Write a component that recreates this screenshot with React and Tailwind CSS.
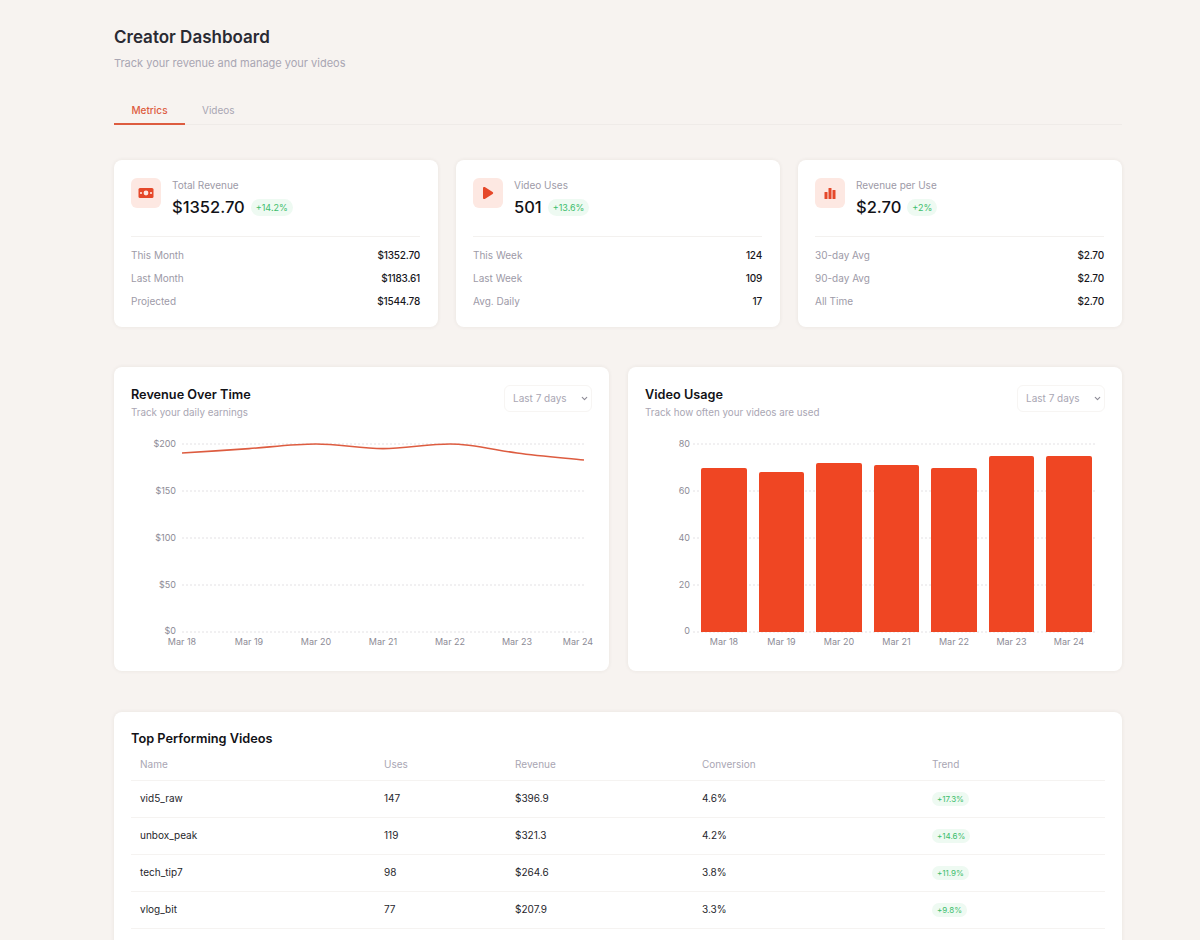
import { ChevronDown } from "lucide-react";

const stats = [
  {
    label: "Total Revenue",
    value: "$1352.70",
    change: "+14.2%",
    icon: "money",
    rows: [["This Month", "$1352.70"], ["Last Month", "$1183.61"], ["Projected", "$1544.78"]],
  },
  {
    label: "Video Uses",
    value: "501",
    change: "+13.6%",
    icon: "play",
    rows: [["This Week", "124"], ["Last Week", "109"], ["Avg. Daily", "17"]],
  },
  {
    label: "Revenue per Use",
    value: "$2.70",
    change: "+2%",
    icon: "bars",
    rows: [["30-day Avg", "$2.70"], ["90-day Avg", "$2.70"], ["All Time", "$2.70"]],
  },
];

const days = ["Mar 18", "Mar 19", "Mar 20", "Mar 21", "Mar 22", "Mar 23", "Mar 24"];
const gridY = [12, 59, 106, 153, 200];

const bars = [
  { x: 70, w: 46, top: 36 },
  { x: 128, w: 45, top: 40 },
  { x: 185, w: 46, top: 31 },
  { x: 243, w: 45, top: 33 },
  { x: 300, w: 46, top: 36 },
  { x: 358, w: 45, top: 24 },
  { x: 415, w: 46, top: 24 },
];

const videos = [
  ["vid5_raw", "147", "$396.9", "4.6%", "+17.3%"],
  ["unbox_peak", "119", "$321.3", "4.2%", "+14.6%"],
  ["tech_tip7", "98", "$264.6", "3.8%", "+11.9%"],
  ["vlog_bit", "77", "$207.9", "3.3%", "+9.8%"],
];

function StatIcon({ name }) {
  if (name === "money") {
    return (
      <svg width="16" height="12" viewBox="0 0 16 12">
        <rect x="0.5" y="1" width="15" height="10" rx="1.5" fill="#e5482a" />
        <circle cx="8" cy="6" r="2.4" fill="#fde8e2" />
        <rect x="2.2" y="5" width="1.6" height="2" fill="#fde8e2" />
        <rect x="12.2" y="5" width="1.6" height="2" fill="#fde8e2" />
      </svg>
    );
  }
  if (name === "play") {
    return (
      <svg width="12" height="14" viewBox="0 0 12 14">
        <path d="M1 2 C1 1 2 0.6 2.8 1.1 L10.6 6 C11.4 6.5 11.4 7.5 10.6 8 L2.8 12.9 C2 13.4 1 13 1 12 Z" fill="#e5482a" />
      </svg>
    );
  }
  return (
    <svg width="12" height="12" viewBox="0 0 12 12">
      <rect x="0.5" y="5" width="3" height="7" rx="0.5" fill="#e5482a" />
      <rect x="4.5" y="1" width="3" height="11" rx="0.5" fill="#e5482a" />
      <rect x="8.5" y="3" width="3" height="9" rx="0.5" fill="#e5482a" />
    </svg>
  );
}

function StatCard({ stat }) {
  return (
    <div className="rounded-lg bg-white pt-[18px] pr-[18px] pb-[14px] pl-[17px] shadow-[0_0_4px_rgba(60,40,30,0.07)]">
      <div className="flex gap-[11px] border-b border-[#f3f1ef] pb-[17px]">
        <div className="flex h-[30px] w-[30px] items-center justify-center rounded-md bg-[#fde8e2]">
          <StatIcon name={stat.icon} />
        </div>
        <div>
          <div className="text-[10px] leading-[14px] text-[#9d9aa7]">{stat.label}</div>
          <div className="mt-[3px] flex items-center gap-[6px]">
            <span className="text-[16.5px] leading-[24px] font-medium text-[#121217]">{stat.value}</span>
            <span className="rounded-full bg-[#eefaf2] px-[5px] py-[2px] text-[9px] leading-[13px] text-[#3dbd6c]">{stat.change}</span>
          </div>
        </div>
      </div>
      <div className="mt-[7px]">
        {stat.rows.map(([name, val]) => (
          <div key={name} className="flex h-[23px] items-center justify-between text-[10px]">
            <span className="text-[#9d9aa7]">{name}</span>
            <span className="font-medium tracking-[-0.2px] text-[#17171c]">{val}</span>
          </div>
        ))}
      </div>
    </div>
  );
}

function ChartCard({ title, subtitle, children }) {
  return (
    <div className="rounded-lg bg-white px-[17px] pt-[18px] pb-[19px] shadow-[0_0_4px_rgba(60,40,30,0.07)]">
      <div className="flex h-[47px] items-start justify-between">
        <div>
          <div className="text-[12.7px] leading-[20px] font-semibold text-[#121217]">{title}</div>
          <div className="mt-[1px] text-[9.8px] leading-[14px] text-[#a9a6b3]">{subtitle}</div>
        </div>
        <button className="flex h-[27px] w-[88px] items-center justify-between rounded-md border border-[#f7f5f3] pr-[2px] pl-[8px] text-[10px] text-[#a9a6b3]">
          Last 7 days
          <ChevronDown size={9} strokeWidth={3} className="text-[#8d8b96]" />
        </button>
      </div>
      {children}
    </div>
  );
}

function Grid({ labels, x1, x2, labelX }) {
  return gridY.map((y, i) => (
    <g key={y}>
      <line x1={x1} x2={x2} y1={y} y2={y} stroke="#e3e1e4" strokeWidth="1" strokeDasharray="2 2" />
      <text x={labelX} y={y + (i === 4 ? 2 : 3)} textAnchor="end" fontSize="9" fill="#8d8b96">{labels[i]}</text>
    </g>
  ));
}

function RevenueChart() {
  const xs = [51, 118, 185, 252, 319, 386, 447];
  return (
    <svg width="461" height="220" viewBox="0 0 461 220" className="block overflow-visible">
      <Grid labels={["$200", "$150", "$100", "$50", "$0"]} x1={51} x2={453} labelX={45} />
      <path
        d="M51 21 C73 19.6 96 18.2 118 16.6 C140 15 163 12 185 12 C207 12 230 16.6 252 16.6 C274 16.6 297 12 319 12 C341 12 364 18 386 21 C408 24 431 25.8 453 28"
        fill="none"
        stroke="#dd5c40"
        strokeWidth="1.6"
      />
      {days.map((d, i) => (
        <text key={d} x={xs[i]} y={213} textAnchor="middle" fontSize="9" fill="#8d8b96">{d}</text>
      ))}
    </svg>
  );
}

function UsageChart() {
  return (
    <svg width="461" height="220" viewBox="0 0 461 220" className="block overflow-visible">
      <Grid labels={["80", "60", "40", "20", "0"]} x1={48} x2={451} labelX={45} />
      {bars.map((b) => (
        <path
          key={b.x}
          d={`M${b.x - 14} 200 V${b.top + 2} Q${b.x - 14} ${b.top} ${b.x - 12} ${b.top} H${b.x + b.w - 16} Q${b.x + b.w - 14} ${b.top} ${b.x + b.w - 14} ${b.top + 2} V200 Z`}
          fill="#ef4623"
        />
      ))}
      {bars.map((b, i) => (
        <text key={days[i]} x={b.x - 14 + b.w / 2} y={213} textAnchor="middle" fontSize="9" fill="#8d8b96">{days[i]}</text>
      ))}
    </svg>
  );
}

export default function App() {
  return (
    <div className="h-[940px] overflow-hidden bg-[#f7f3f0] pt-[26px] pr-[78px] pl-[114px] font-['Inter',sans-serif]">
      <h1 className="text-[17px] leading-[22px] font-semibold text-[#2a2a33]">Creator Dashboard</h1>
      <p className="mt-[6px] text-[11px] leading-[18px] text-[#a9a6b3]">Track your revenue and manage your videos</p>

      <div className="mt-[25px] flex border-b border-[#efebe8]">
        <div className="-mb-px w-[71px] border-b-2 border-[#dd5c40] pt-[5px] pb-[5px] text-center text-[10px] leading-[16px] font-medium text-[#dd5c40]">Metrics</div>
        <div className="w-[67px] pt-[5px] pb-[5px] pl-[17px] text-[10px] leading-[16px] text-[#a9a6b3]">Videos</div>
      </div>

      <div className="mt-[35px] grid grid-cols-3 gap-[18px]">
        {stats.map((s) => (
          <StatCard key={s.label} stat={s} />
        ))}
      </div>

      <div className="mt-[40px] grid grid-cols-[495px_494px] gap-[19px]">
        <ChartCard title="Revenue Over Time" subtitle="Track your daily earnings">
          <RevenueChart />
        </ChartCard>
        <ChartCard title="Video Usage" subtitle="Track how often your videos are used">
          <UsageChart />
        </ChartCard>
      </div>

      <div className="mt-[41px] rounded-lg bg-white px-[17px] pt-[17px] pb-[30px] shadow-[0_0_4px_rgba(60,40,30,0.07)]">
        <div className="text-[12.75px] leading-[20px] font-semibold text-[#121217]">Top Performing Videos</div>
        <table className="w-[974px] table-fixed text-left text-[10px]">
          <colgroup>
            <col className="w-[244px]" />
            <col className="w-[131px]" />
            <col className="w-[187px]" />
            <col className="w-[230px]" />
            <col className="w-[182px]" />
          </colgroup>
          <thead>
            <tr className="border-b border-[#f5f3f1] text-[#a9a6b3]">
              {["Name", "Uses", "Revenue", "Conversion", "Trend"].map((h) => (
                <th key={h} className="h-[31px] px-[9px] font-normal">{h}</th>
              ))}
            </tr>
          </thead>
          <tbody>
            {videos.map((v) => (
              <tr key={v[0]} className="border-b border-[#f5f3f1] text-[#26262c]">
                <td className="h-[37px] px-[9px]">{v[0]}</td>
                <td className="px-[9px]">{v[1]}</td>
                <td className="px-[9px]">{v[2]}</td>
                <td className="px-[9px]">{v[3]}</td>
                <td className="px-[9px]">
                  <span className="rounded-full bg-[#eefaf2] px-[5px] py-[2px] text-[8px] text-[#3dbd6c]">{v[4]}</span>
                </td>
              </tr>
            ))}
          </tbody>
        </table>
      </div>
    </div>
  );
}
